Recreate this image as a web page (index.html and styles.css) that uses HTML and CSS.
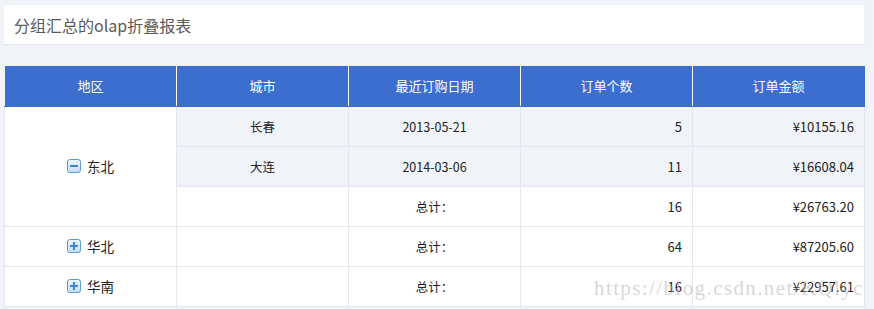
FILE: index.html
```html
<!DOCTYPE html>
<html lang="zh">
<head>
<meta charset="utf-8">
<title>olap</title>
<link rel="stylesheet" href="styles.css">
</head>
<body>
<div class="page">
  <div class="panel"><h1 class="title">分组汇总的olap折叠报表</h1></div>
  <div class="table-wrap">
    <table class="report">
      <colgroup><col class="c"><col class="c"><col class="c"><col class="c"><col class="c"></colgroup>
      <thead>
        <tr><th>地区</th><th>城市</th><th>最近订购日期</th><th>订单个数</th><th>订单金额</th></tr>
      </thead>
      <tbody>
        <tr class="detail">
          <td class="region" rowspan="3"><span class="grp"><svg class="tg" width="14" height="14" viewBox="0 0 14 14"><defs><linearGradient id="g1" x1="0" y1="0" x2="0" y2="1"><stop offset="0" stop-color="#eef6fe"/><stop offset="1" stop-color="#c6ddf5"/></linearGradient></defs><rect x="0.5" y="0.5" width="13" height="13" rx="2.5" fill="url(#g1)" stroke="#5e9bd6"/><rect x="3" y="6" width="8" height="2" fill="#3b86dc"/></svg>东北</span></td>
          <td class="ctr">长春</td><td class="ctr">2013-05-21</td><td class="num">5</td><td class="num">¥10155.16</td>
        </tr>
        <tr class="detail">
          <td class="ctr">大连</td><td class="ctr">2014-03-06</td><td class="num">11</td><td class="num">¥16608.04</td>
        </tr>
        <tr>
          <td></td><td class="ctr">总计：</td><td class="num">16</td><td class="num">¥26763.20</td>
        </tr>
        <tr>
          <td class="region"><span class="grp"><svg class="tg" width="14" height="14" viewBox="0 0 14 14"><defs><linearGradient id="g2" x1="0" y1="0" x2="0" y2="1"><stop offset="0" stop-color="#eef6fe"/><stop offset="1" stop-color="#c6ddf5"/></linearGradient></defs><rect x="0.5" y="0.5" width="13" height="13" rx="2.5" fill="url(#g2)" stroke="#5e9bd6"/><rect x="3" y="6" width="8" height="2" fill="#3b86dc"/><rect x="6" y="3" width="2" height="8" fill="#3b86dc"/></svg>华北</span></td>
          <td></td><td class="ctr">总计：</td><td class="num">64</td><td class="num">¥87205.60</td>
        </tr>
        <tr>
          <td class="region"><span class="grp"><svg class="tg" width="14" height="14" viewBox="0 0 14 14"><defs><linearGradient id="g3" x1="0" y1="0" x2="0" y2="1"><stop offset="0" stop-color="#eef6fe"/><stop offset="1" stop-color="#c6ddf5"/></linearGradient></defs><rect x="0.5" y="0.5" width="13" height="13" rx="2.5" fill="url(#g3)" stroke="#5e9bd6"/><rect x="3" y="6" width="8" height="2" fill="#3b86dc"/><rect x="6" y="3" width="2" height="8" fill="#3b86dc"/></svg>华南</span></td>
          <td></td><td class="ctr">总计：</td><td class="num">16</td><td class="num">¥22957.61</td>
        </tr>
      </tbody>
    </table>
    <div class="watermark">https://blog.csdn.net/KQlyc</div>
  </div>
</div>
</body>
</html>
```

FILE: styles.css
```css
html, body {
  margin: 0;
  padding: 0;
  background: #f0f3f7;
  font-family: "Noto Sans CJK SC", "Noto Sans", sans-serif;
}
.page {
  padding: 5px 10px 0 4px;
}
.panel {
  background: #fff;
  height: 39px;
  display: flex;
  align-items: center;
  padding-left: 10px;
  box-shadow: 0 1px 1px rgba(0,0,0,0.05);
}
.title {
  margin: 0;
  font-size: 16px;
  font-weight: 400;
  color: #5a5a5a;
  line-height: 20px;
}
.table-wrap {
  position: relative;
  margin-top: 22px;
}
.report {
  border-collapse: collapse;
  table-layout: fixed;
  width: 861px;
  font-size: 12.5px;
  color: #222;
}
.report col.c { width: 172px; }
.report tr { height: 40px; }
.report th {
  padding: 0;
  background: #3c6ecf;
  color: #fff;
  font-weight: 400;
  font-size: 13px;
  border-left: 1px solid #fff;
  border-right: 1px solid #fff;
  border-top: none;
  border-bottom: 1px solid #3c6ecf;
}
.report th:first-child { border-left: 1px solid #f0f3f7; }
.report th:last-child { border-right: 1px solid #3c6ecf; }
.report td {
  padding: 0 10px;
  border: 1px solid #e3e6ec;
  background: #fff;
}
.report tr.detail td { background: #f0f3f8; }
.report tr.detail td.region { background: #fff; }
.ctr { text-align: center; }
.num { text-align: right; font-size: 13px; }
.region { text-align: center; font-size: 13.5px; }
.grp {
  display: inline-flex;
  align-items: center;
  gap: 6px;
}
.tg { display: block; }
.watermark {
  position: absolute;
  left: 590px;
  top: 210px;
  font-family: "Liberation Serif", serif;
  font-size: 21px;
  letter-spacing: 1.4px;
  color: rgba(180, 180, 180, 0.55);
  pointer-events: none;
  white-space: nowrap;
}
```
